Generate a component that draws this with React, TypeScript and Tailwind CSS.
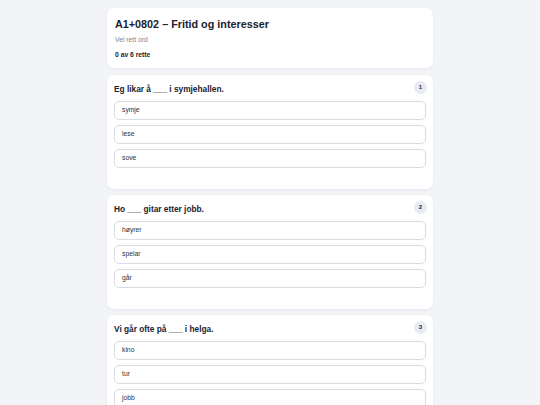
import React from "react";

const questions = [
  { n: 1, q: "Eg likar å ___ i symjehallen.", opts: ["symje", "lese", "sove"] },
  { n: 2, q: "Ho ___ gitar etter jobb.", opts: ["høyrer", "spelar", "går"] },
  { n: 3, q: "Vi går ofte på ___ i helga.", opts: ["kino", "tur", "jobb"] },
];

export default function App() {
  return (
    <div
      className="min-h-[405px] bg-[#f3f4f8] pt-[8px] pb-[20px]"
      style={{ fontFamily: '"Liberation Sans", Arial, sans-serif' }}
    >
      <div className="mx-auto flex w-[326px] flex-col gap-[6px]">
        <div className="mb-[1px] rounded-[7px] bg-white px-[8px] pt-[10px] pb-[8px] shadow-[0_1px_3px_rgba(15,23,42,0.06)]">
          <h1 className="text-[10.8px] leading-[13px] font-bold text-[#1b2230]">
            A1+0802 – Fritid og interesser
          </h1>
          <p className="mt-[4px] text-[6.75px] leading-[10px] text-[#7b8190]">Vel rett ord</p>
          <p className="mt-[5px] text-[6.75px] leading-[10px] font-bold text-[#1b2230]">0 av 6 rette</p>
        </div>
        {questions.map((item) => (
          <div
            key={item.n}
            className="relative rounded-[7px] bg-white px-[7px] pt-[9px] pb-[21px] shadow-[0_1px_3px_rgba(15,23,42,0.06)]"
          >
            <div className="absolute top-[6px] right-[6px] flex h-[13px] w-[13px] items-center justify-center rounded-full bg-[#e8ebf5] text-[6px] font-bold text-[#1f2937]">
              {item.n}
            </div>
            <p className="text-[8.3px] leading-[11px] font-bold text-[#1b2230]">{item.q}</p>
            <div className="mt-[6px] flex flex-col gap-[5px]">
              {item.opts.map((o) => (
                <div
                  key={o}
                  className="flex h-[19px] items-center rounded-[5px] border border-[#d9dce4] bg-white px-[7px] text-[6.75px] text-[#2b3240]"
                >
                  {o}
                </div>
              ))}
            </div>
          </div>
        ))}
      </div>
    </div>
  );
}
